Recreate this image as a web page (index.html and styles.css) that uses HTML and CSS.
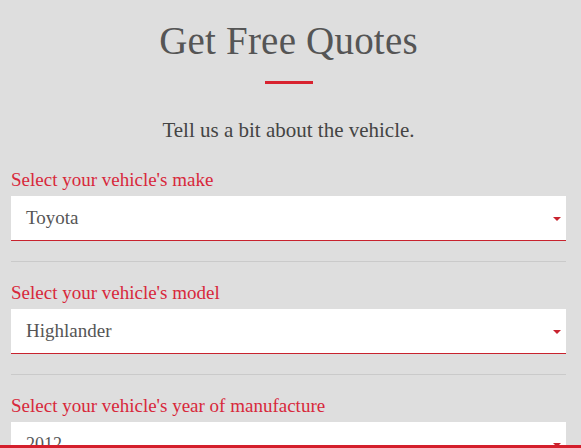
FILE: index.html
```html
<!DOCTYPE html>
<html>
<head>
<meta charset="utf-8">
<link rel="stylesheet" href="styles.css">
</head>
<body>
<div class="page">
  <h1 class="title">Get Free Quotes</h1>
  <div class="rule"></div>
  <p class="intro">Tell us a bit about the vehicle.</p>
  <div class="field">
    <label class="label">Select your vehicle's make</label>
    <div class="select"><span class="value">Toyota</span><span class="arrow"></span></div>
  </div>
  <hr class="sep">
  <div class="field">
    <label class="label">Select your vehicle's model</label>
    <div class="select"><span class="value">Highlander</span><span class="arrow"></span></div>
  </div>
  <hr class="sep">
  <div class="field">
    <label class="label">Select your vehicle's year of manufacture</label>
    <div class="select"><span class="value year">2012</span><span class="arrow"></span></div>
  </div>
</div>
<div class="bottombar"></div>
</body>
</html>
```
FILE: styles.css
```css
html, body {
  margin: 0;
  padding: 0;
  background: #dedede;
  overflow: hidden;
  height: 448px;
}
.page {
  padding: 0 15px 0 11px;
  font-family: "Liberation Serif", serif;
}
.title {
  margin: 0;
  padding-top: 18px;
  text-align: center;
  font-weight: normal;
  font-size: 39px;
  line-height: 46px;
  color: #555;
  letter-spacing: 0.2px;
}
.rule {
  width: 48px;
  height: 3px;
  background: #d8222f;
  margin: 17px auto 0;
}
.intro {
  margin: 34px 0 0;
  text-align: center;
  font-size: 21px;
  line-height: 24px;
  color: #444;
}
.field {
  display: flex;
  flex-direction: column;
}
.intro + .field { margin-top: 27px; }
.label {
  font-size: 19px;
  line-height: 22px;
  color: #d8283b;
  margin-bottom: 5px;
}
.select {
  height: 44px;
  background: #fff;
  border-bottom: 1px solid #c8232e;
  display: flex;
  align-items: center;
  justify-content: space-between;
  padding: 0 5px 0 15px;
}
.value {
  font-size: 19px;
  color: #555;
}
.value.year {
  font-size: 18px;
}
.arrow {
  width: 0;
  height: 0;
  border-left: 4px solid transparent;
  border-right: 4px solid transparent;
  border-top: 4px solid #c8232e;
  margin-top: 2px;
}
.sep {
  border: 0;
  border-top: 1px solid #cacaca;
  margin: 20px 0 20px;
}
.bottombar {
  position: fixed;
  left: 0;
  right: 0;
  bottom: 0;
  height: 3px;
  background: #d41f2c;
}
```
